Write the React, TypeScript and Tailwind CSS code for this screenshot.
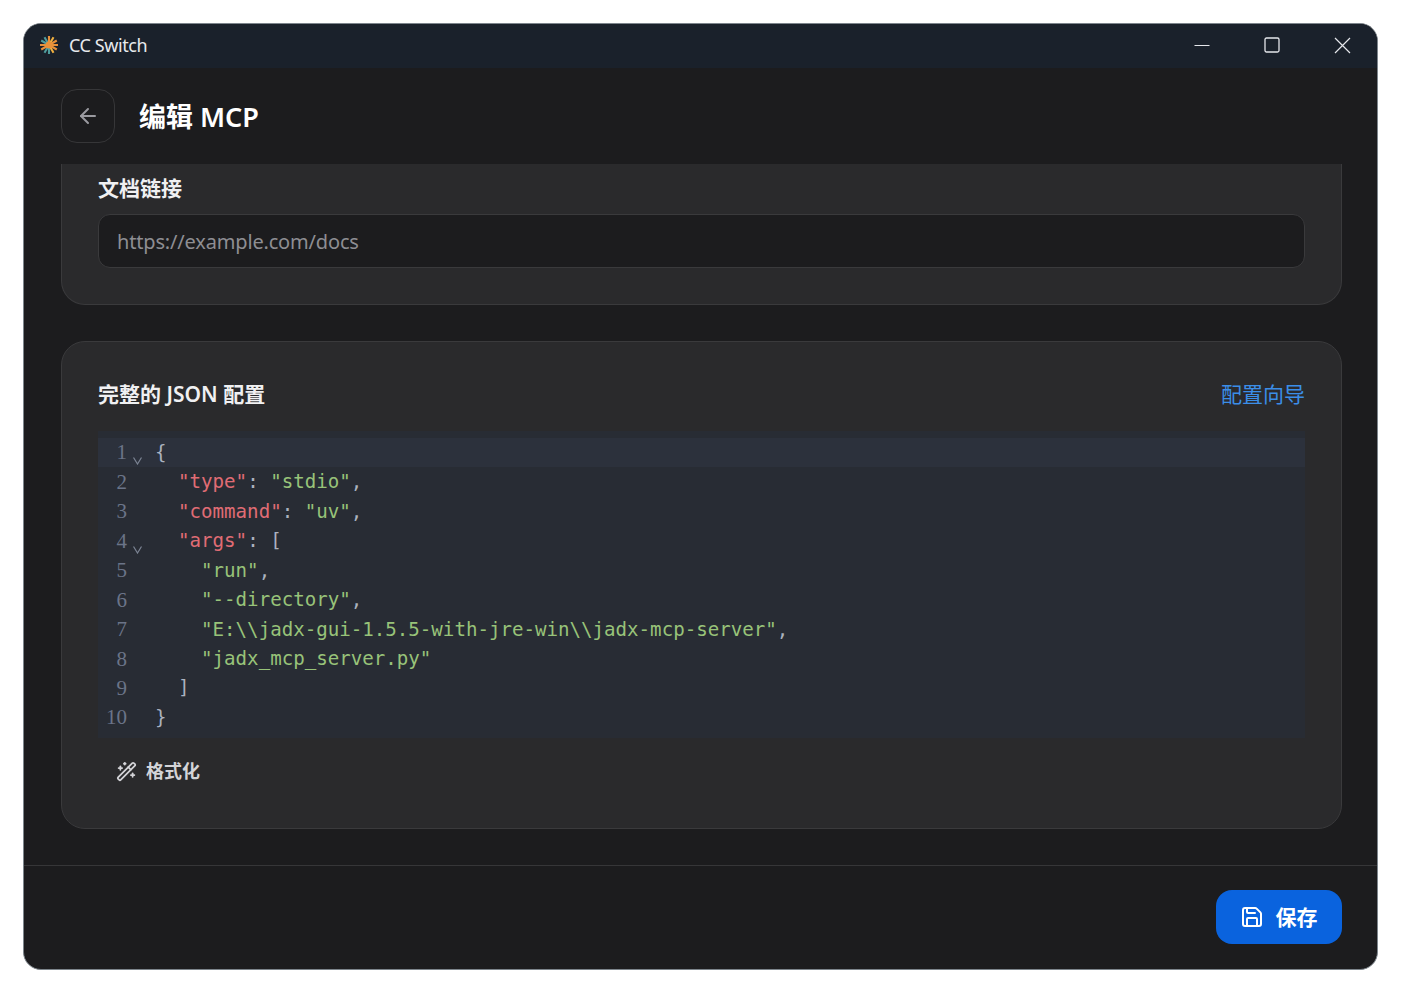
import { ArrowLeft, Save, WandSparkles } from "lucide-react";

const SANS = "font-['Noto_Sans','Noto_Sans_CJK_SC',sans-serif]";

type Token = [string, string];

const KEY = "text-[#e06c75]";
const STR = "text-[#98c379]";
const PUN = "text-[#abb2bf]";

const lines: { indent: number; fold?: boolean; tokens: Token[] }[] = [
  { indent: 0, fold: true, tokens: [["{", PUN]] },
  { indent: 2, tokens: [['"type"', KEY], [": ", PUN], ['"stdio"', STR], [",", PUN]] },
  { indent: 2, tokens: [['"command"', KEY], [": ", PUN], ['"uv"', STR], [",", PUN]] },
  { indent: 2, fold: true, tokens: [['"args"', KEY], [": [", PUN]] },
  { indent: 4, tokens: [['"run"', STR], [",", PUN]] },
  { indent: 4, tokens: [['"--directory"', STR], [",", PUN]] },
  { indent: 4, tokens: [['"E:\\\\jadx-gui-1.5.5-with-jre-win\\\\jadx-mcp-server"', STR], [",", PUN]] },
  { indent: 4, tokens: [['"jadx_mcp_server.py"', STR]] },
  { indent: 2, tokens: [["]", PUN]] },
  { indent: 0, tokens: [["}", PUN]] },
];

function Logo() {
  const rays = [
    { a: 0, c: "#e8913a" },
    { a: 30, c: "#e8913a" },
    { a: 60, c: "#f0b040" },
    { a: 90, c: "#4f9d9d" },
    { a: 120, c: "#4f9d9d" },
    { a: 150, c: "#e8913a" },
    { a: 180, c: "#e8913a" },
    { a: 210, c: "#4f9d9d" },
    { a: 240, c: "#4f9d9d" },
    { a: 270, c: "#e8913a" },
    { a: 300, c: "#f0b040" },
    { a: 330, c: "#e8913a" },
  ];
  return (
    <svg width="20" height="20" viewBox="0 0 20 20" fill="none">
      {rays.map((r) => (
        <line
          key={r.a}
          x1="10"
          y1="10"
          x2="19"
          y2="10"
          stroke={r.c}
          strokeWidth="2.1"
          transform={`rotate(${r.a} 10 10)`}
        />
      ))}
      <circle cx="10" cy="10" r="3.5" fill="#e8913a" />
    </svg>
  );
}

function FoldMark() {
  return (
    <svg width="9" height="8" viewBox="0 0 9 8" fill="none" className="mt-[16px]">
      <path d="M0.5 0.5 L4.5 7 L8.5 0.5" stroke="#7c8494" strokeWidth="1.2" />
    </svg>
  );
}

function TitleBar() {
  return (
    <div className="h-[44px] shrink-0 bg-[#1a212b] flex items-center justify-between pb-[2px]">
      <div className="flex items-center pl-[15px]">
        <Logo />
        <span className="ml-[10px] text-[18px] text-[#e8eaed] tracking-[-0.42px]">CC Switch</span>
      </div>
      <div className="flex items-center">
        <button className="w-[70px] h-[42px] flex items-center justify-center">
          <svg width="16" height="16" viewBox="0 0 16 16" fill="none">
            <path d="M0.5 8.5 H15.5" stroke="#e5e7eb" strokeWidth="1" />
          </svg>
        </button>
        <button className="w-[70px] h-[42px] flex items-center justify-center">
          <svg width="16" height="16" viewBox="0 0 16 16" fill="none">
            <rect x="1" y="1" width="14" height="14" rx="1.5" stroke="#e5e7eb" strokeWidth="1.3" />
          </svg>
        </button>
        <button className="w-[70px] h-[42px] flex items-center justify-center">
          <svg width="17" height="17" viewBox="0 0 17 17" fill="none">
            <path d="M1 1 L16 16 M16 1 L1 16" stroke="#e5e7eb" strokeWidth="1.2" />
          </svg>
        </button>
      </div>
    </div>
  );
}

function CodeEditor() {
  return (
    <div className="mt-[22px] bg-[#282c34] pt-[7px] pb-[6px] font-['DejaVu_Sans_Mono',monospace] text-[19.14px]">
      {lines.map((line, i) => (
        <div key={i} className={`h-[29.44px] pt-[1px] flex items-center ${i === 0 ? "bg-[#2c313c]" : ""}`}>
          <div className="w-[29px] text-right text-[#6b7488] text-[21px] font-['Liberation_Serif',serif] shrink-0">{i + 1}</div>
          <div className="w-[28px] h-full pl-[6px] shrink-0 flex items-center">
            {line.fold && <FoldMark />}
          </div>
          <div className="whitespace-pre">
            {" ".repeat(line.indent)}
            {line.tokens.map(([text, color], j) => (
              <span key={j} className={color}>
                {text}
              </span>
            ))}
          </div>
        </div>
      ))}
    </div>
  );
}

export default function App() {
  return (
    <div className={`w-[1402px] h-[993px] bg-white pt-[23px] pl-[23px] overflow-hidden ${SANS}`}>
      <div className="w-[1355px] h-[947px] rounded-[18px] border border-[#7d858c] bg-[#1c1c1e] overflow-hidden flex flex-col">
        <TitleBar />

        <div className="h-[96px] shrink-0 flex items-center pl-[37px] pr-[35px]">
          <button className="w-[54px] h-[54px] rounded-2xl border border-[#363638] flex items-center justify-center text-[#9a9aa0]">
            <ArrowLeft size={24} strokeWidth={2} />
          </button>
          <h1 className="ml-[24px] pt-[2px] text-[27px] font-semibold text-white">编辑 MCP</h1>
        </div>

        <div className="flex-1 pl-[37px] pr-[35px] flex flex-col gap-[36px] min-h-0">
          <section className="h-[141px] rounded-b-3xl border border-t-0 border-[#3a3a3c] bg-[#2a2a2c] px-[36px] pt-[9px]">
            <label className="block text-[21px] leading-[30px] font-semibold text-[#f0f0f2]">文档链接</label>
            <div className="mt-[11px] h-[54px] rounded-xl border border-[#3a3a3c] bg-[#1c1c1e] px-[18px] pt-[2px] flex items-center text-[20px] tracking-[-0.17px] text-[#8e8e93]">
              https://example.com/docs
            </div>
          </section>

          <section className="h-[488px] rounded-3xl border border-[#3a3a3c] bg-[#2a2a2c] px-[36px] pt-[37px]">
            <div className="h-[30px] pt-[1px] flex items-center justify-between">
              <h2 className="text-[21px] font-semibold text-[#f0f0f2]">完整的 JSON 配置</h2>
              <a className="text-[21px] text-[#3b8ee8]">配置向导</a>
            </div>
            <CodeEditor />
            <button className="mt-[20px] ml-[18px] flex items-center gap-[9px] text-[18px] font-semibold text-[#d4d4d8]">
              <WandSparkles size={21} strokeWidth={2} />
              格式化
            </button>
          </section>
        </div>

        <div className="h-[104px] shrink-0 border-t border-[#363638] pr-[35px] flex items-start justify-end pt-[24px]">
          <button className="w-[126px] h-[54px] rounded-2xl bg-[#0a63de] text-white text-[21px] font-semibold flex items-center justify-center gap-[12px] pr-[1px]">
            <Save size={24} strokeWidth={2} />
            <span className="pt-[1px]">保存</span>
          </button>
        </div>
      </div>
    </div>
  );
}
